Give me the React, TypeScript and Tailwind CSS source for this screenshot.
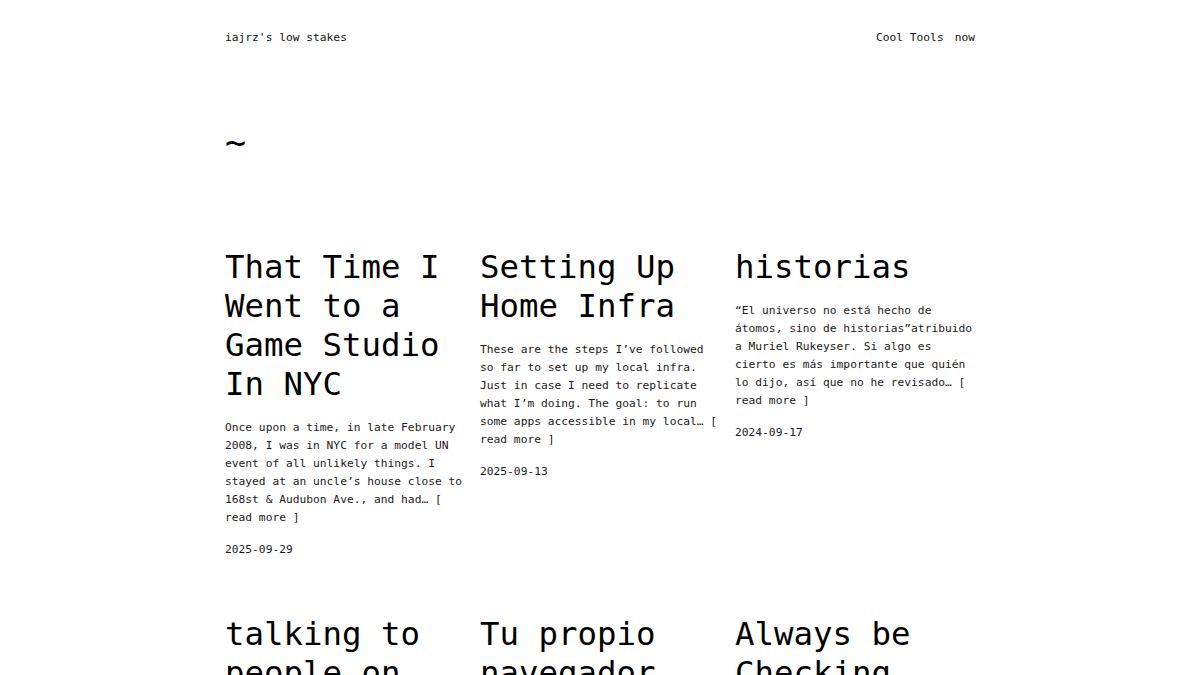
const posts = [
  {
    title: "That Time I Went to a Game Studio In NYC",
    excerpt:
      "Once upon a time, in late February 2008, I was in NYC for a model UN event of all unlikely things. I stayed at an uncle’s house close to 168st & Audubon Ave., and had…",
    date: "2025-09-29",
  },
  {
    title: "Setting Up Home Infra",
    excerpt:
      "These are the steps I’ve followed so far to set up my local infra. Just in case I need to replicate what I’m doing. The goal: to run some apps accessible in my local…",
    date: "2025-09-13",
  },
  {
    title: "historias",
    excerpt:
      "“El universo no está hecho de átomos, sino de historias”atribuido a Muriel Rukeyser. Si algo es cierto es más importante que quién lo dijo, así que no he revisado…",
    date: "2024-09-17",
  },
  {
    title: "talking to people on the internet",
    excerpt:
      "Some notes on what it is like to talk with strangers online, and why I keep doing it anyway…",
    date: "2024-06-02",
  },
  {
    title: "Tu propio navegador web",
    excerpt:
      "Una pequeña guía para armar tu propio navegador, por diversión y sin mucha pretensión…",
    date: "2024-03-11",
  },
  {
    title: "Always be Checking things",
    excerpt:
      "A short reminder to myself about verifying assumptions before shipping anything…",
    date: "2023-12-20",
  },
];

export default function App() {
  return (
    <div
      className="min-h-screen bg-white text-[#111]"
      style={{ fontFamily: '"DejaVu Sans Mono", "Liberation Mono", monospace' }}
    >
      <div className="mx-auto w-[750px] pt-[29px]">
        <header className="flex items-center justify-between text-[11.25px] leading-[18px] text-[#111]">
          <a href="#">iajrz's low stakes</a>
          <nav className="flex gap-[11px]">
            <a href="#">Cool Tools</a>
            <a href="#">now</a>
          </nav>
        </header>

        <h1 className="mt-[77px] text-[35px] leading-[39px] text-black">~</h1>

        <main className="mt-[85px] grid grid-cols-3 gap-x-[15px] gap-y-[56px] pb-10">
          {posts.map((p) => (
            <article key={p.title} className="flex flex-col">
              <h2 className="text-[32.4px] leading-[39px] text-black">
                <a href="#">{p.title}</a>
              </h2>
              <p className="mt-[14.5px] text-[11.25px] leading-[18px] text-[#1a1a1a]">
                {p.excerpt} <a href="#">[ read more ]</a>
              </p>
              <time className="mt-[14px] text-[11.25px] leading-[18px] text-[#1a1a1a]">
                {p.date}
              </time>
            </article>
          ))}
        </main>
      </div>
    </div>
  );
}
